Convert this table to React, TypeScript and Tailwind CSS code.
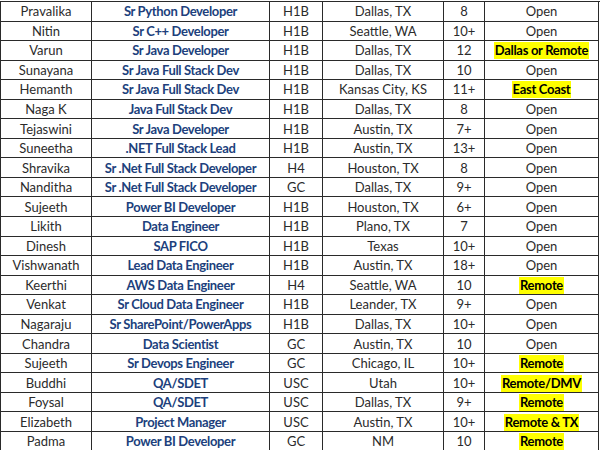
type Row = {
  name: string;
  role: string;
  visa: string;
  location: string;
  exp: string;
  status: string;
  highlight?: boolean;
};

const rows: Row[] = [
  { name: "Pravalika", role: "Sr Python Developer", visa: "H1B", location: "Dallas, TX", exp: "8", status: "Open" },
  { name: "Nitin", role: "Sr C++ Developer", visa: "H1B", location: "Seattle, WA", exp: "10+", status: "Open" },
  { name: "Varun", role: "Sr Java Developer", visa: "H1B", location: "Dallas, TX", exp: "12", status: "Dallas or Remote", highlight: true },
  { name: "Sunayana", role: "Sr Java Full Stack Dev", visa: "H1B", location: "Dallas, TX", exp: "10", status: "Open" },
  { name: "Hemanth", role: "Sr Java Full Stack Dev", visa: "H1B", location: "Kansas City, KS", exp: "11+", status: "East Coast", highlight: true },
  { name: "Naga K", role: "Java Full Stack Dev", visa: "H1B", location: "Dallas, TX", exp: "8", status: "Open" },
  { name: "Tejaswini", role: "Sr Java Developer", visa: "H1B", location: "Austin, TX", exp: "7+", status: "Open" },
  { name: "Suneetha", role: ".NET Full Stack Lead", visa: "H1B", location: "Austin, TX", exp: "13+", status: "Open" },
  { name: "Shravika", role: "Sr .Net Full Stack Developer", visa: "H4", location: "Houston, TX", exp: "8", status: "Open" },
  { name: "Nanditha", role: "Sr .Net Full Stack Developer", visa: "GC", location: "Dallas, TX", exp: "9+", status: "Open" },
  { name: "Sujeeth", role: "Power BI Developer", visa: "H1B", location: "Houston, TX", exp: "6+", status: "Open" },
  { name: "Likith", role: "Data Engineer", visa: "H1B", location: "Plano, TX", exp: "7", status: "Open" },
  { name: "Dinesh", role: "SAP FICO", visa: "H1B", location: "Texas", exp: "10+", status: "Open" },
  { name: "Vishwanath", role: "Lead Data Engineer", visa: "H1B", location: "Austin, TX", exp: "18+", status: "Open" },
  { name: "Keerthi", role: "AWS Data Engineer", visa: "H4", location: "Seattle, WA", exp: "10", status: "Remote", highlight: true },
  { name: "Venkat", role: "Sr Cloud Data Engineer", visa: "H1B", location: "Leander, TX", exp: "9+", status: "Open" },
  { name: "Nagaraju", role: "Sr SharePoint/PowerApps", visa: "H1B", location: "Dallas, TX", exp: "10+", status: "Open" },
  { name: "Chandra", role: "Data Scientist", visa: "GC", location: "Austin, TX", exp: "10", status: "Open" },
  { name: "Sujeeth", role: "Sr Devops Engineer", visa: "GC", location: "Chicago, IL", exp: "10+", status: "Remote", highlight: true },
  { name: "Buddhi", role: "QA/SDET", visa: "USC", location: "Utah", exp: "10+", status: "Remote/DMV", highlight: true },
  { name: "Foysal", role: "QA/SDET", visa: "USC", location: "Dallas, TX", exp: "9+", status: "Remote", highlight: true },
  { name: "Elizabeth", role: "Project Manager", visa: "USC", location: "Austin, TX", exp: "10+", status: "Remote & TX", highlight: true },
  { name: "Padma", role: "Power BI Developer", visa: "GC", location: "NM", exp: "10", status: "Remote", highlight: true },
];

const cell =
  "h-[19.55px] pt-px flex items-center justify-center border-r border-b border-[#2a2a2a] whitespace-nowrap overflow-hidden";

export default function App() {
  return (
    <div className="w-[600px] h-[450px] overflow-hidden bg-white pt-px">
      <div
        className="grid grid-cols-[91px_178px_53px_121px_41px_114px] border-l border-t border-[#2a2a2a] text-[13px] leading-none text-[#2b2b2b]"
        style={{ fontFamily: "Lato, 'Open Sans', sans-serif" }}
      >
        {rows.map((r, i) => (
          <div key={i} className="contents">
            <div className={cell}>{r.name}</div>
            <div className={`${cell} font-bold tracking-[-0.35px] text-[#203f7c]`}>{r.role}</div>
            <div className={cell}>{r.visa}</div>
            <div className={cell}>{r.location}</div>
            <div className={cell}>{r.exp}</div>
            <div className={cell}>
              {r.highlight ? (
                <span className="bg-[#ffff00] font-bold tracking-[-0.3px] text-black px-px py-[2px]">
                  {r.status}
                </span>
              ) : (
                r.status
              )}
            </div>
          </div>
        ))}
      </div>
    </div>
  );
}
